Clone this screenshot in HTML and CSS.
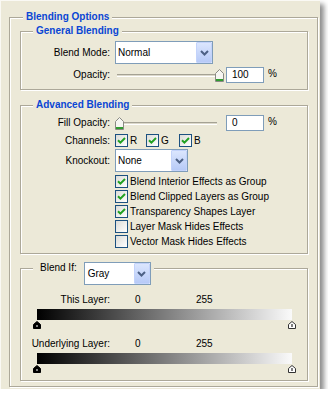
FILE: index.html
```html
<!DOCTYPE html>
<html lang="en">
<head>
    <meta charset="UTF-8">
    <meta name="viewport" content="width=device-width, initial-scale=1.0">
    <title>Blending Options</title>
    <link rel="stylesheet" href="styles.css">
</head>
<body>
    <div class="panel">
        <fieldset class="group outer">
            <legend>Blending Options</legend>

            <!-- General -->
            <fieldset class="group general">
                <legend>General Blending</legend>
                <div class="row">
                    <span class="lbl">Blend Mode:</span>
                    <div class="select mode">
                        <span>Normal</span>
                        <span class="drop"><svg width="9" height="6" viewBox="0 0 9 6"><path d="M1 1l3.5 3.5L8 1" fill="none" stroke="#4d6185" stroke-width="2"/></svg></span>
                    </div>
                </div>
                <div class="row slide-row">
                    <span class="lbl">Opacity:</span>
                    <div class="slider">
                        <div class="track"></div>
                        <svg class="thumb" style="left:100px" width="9" height="13" viewBox="0 0 9 13"><path d="M.5 12.5v-8l4-4 4 4v8z" fill="#f6f6f2" stroke="#8a8a84"/><path d="M1 10h7v2H1z" fill="#2f9c2f"/></svg>
                    </div>
                    <div class="num">100</div>
                    <span class="pct">%</span>
                </div>
            </fieldset>

            <!-- Advanced -->
            <fieldset class="group advanced">
                <legend>Advanced Blending</legend>
                <div class="row slide-row">
                    <span class="lbl">Fill Opacity:</span>
                    <div class="slider">
                        <div class="track"></div>
                        <svg class="thumb" style="left:0px" width="9" height="13" viewBox="0 0 9 13"><path d="M.5 12.5v-8l4-4 4 4v8z" fill="#f6f6f2" stroke="#8a8a84"/><path d="M1 10h7v2H1z" fill="#2f9c2f"/></svg>
                    </div>
                    <div class="num">0</div>
                    <span class="pct">%</span>
                </div>
                <div class="row channels">
                    <span class="lbl">Channels:</span>
                    <label class="check chan-r"><span class="cb"><svg width="9" height="9" viewBox="0 0 9 9"><path d="M1 4.2l2.4 2.4L8 2" fill="none" stroke="#21a121" stroke-width="2"/></svg></span><span class="txt">R</span></label>
                    <label class="check chan-g"><span class="cb"><svg width="9" height="9" viewBox="0 0 9 9"><path d="M1 4.2l2.4 2.4L8 2" fill="none" stroke="#21a121" stroke-width="2"/></svg></span><span class="txt">G</span></label>
                    <label class="check"><span class="cb"><svg width="9" height="9" viewBox="0 0 9 9"><path d="M1 4.2l2.4 2.4L8 2" fill="none" stroke="#21a121" stroke-width="2"/></svg></span><span class="txt">B</span></label>
                </div>
                <div class="row knock-row">
                    <span class="lbl">Knockout:</span>
                    <div class="select knock">
                        <span>None</span>
                        <span class="drop"><svg width="9" height="6" viewBox="0 0 9 6"><path d="M1 1l3.5 3.5L8 1" fill="none" stroke="#4d6185" stroke-width="2"/></svg></span>
                    </div>
                </div>
                <div class="list">
                    <label class="check"><span class="cb"><svg width="9" height="9" viewBox="0 0 9 9"><path d="M1 4.2l2.4 2.4L8 2" fill="none" stroke="#21a121" stroke-width="2"/></svg></span><span class="txt">Blend Interior Effects as Group</span></label>
                    <label class="check"><span class="cb"><svg width="9" height="9" viewBox="0 0 9 9"><path d="M1 4.2l2.4 2.4L8 2" fill="none" stroke="#21a121" stroke-width="2"/></svg></span><span class="txt">Blend Clipped Layers as Group</span></label>
                    <label class="check"><span class="cb"><svg width="9" height="9" viewBox="0 0 9 9"><path d="M1 4.2l2.4 2.4L8 2" fill="none" stroke="#21a121" stroke-width="2"/></svg></span><span class="txt">Transparency Shapes Layer</span></label>
                    <label class="check"><span class="cb"></span><span class="txt">Layer Mask Hides Effects</span></label>
                    <label class="check"><span class="cb"></span><span class="txt">Vector Mask Hides Effects</span></label>
                </div>
            </fieldset>

            <!-- Blend If -->
            <fieldset class="group blendif">
                <legend>
                    <span>Blend If:</span>
                    <div class="select gray">
                        <span>Gray</span>
                        <span class="drop"><svg width="9" height="6" viewBox="0 0 9 6"><path d="M1 1l3.5 3.5L8 1" fill="none" stroke="#4d6185" stroke-width="2"/></svg></span>
                    </div>
                </legend>
                <div class="brow">
                    <span class="lbl">This Layer:</span>
                    <span class="v0">0</span>
                    <span>255</span>
                </div>
                <div class="bar"></div>
                <div class="thumbs">
                    <svg width="8" height="8" viewBox="0 0 8 8"><path d="M.5 7.5v-4l3.5-3 3.5 3v4z" fill="#000" stroke="#000"/><path d="M3.5 4h1v2h-1z" fill="#fff"/></svg>
                    <svg width="8" height="8" viewBox="0 0 8 8"><path d="M.5 7.5v-4l3.5-3 3.5 3v4z" fill="#fff" stroke="#333"/><path d="M3.5 3h1v3h-1z" fill="#000"/></svg>
                </div>
                <div class="brow second">
                    <span class="lbl">Underlying Layer:</span>
                    <span class="v0">0</span>
                    <span>255</span>
                </div>
                <div class="bar"></div>
                <div class="thumbs">
                    <svg width="8" height="8" viewBox="0 0 8 8"><path d="M.5 7.5v-4l3.5-3 3.5 3v4z" fill="#000" stroke="#000"/><path d="M3.5 4h1v2h-1z" fill="#fff"/></svg>
                    <svg width="8" height="8" viewBox="0 0 8 8"><path d="M.5 7.5v-4l3.5-3 3.5 3v4z" fill="#fff" stroke="#333"/><path d="M3.5 3h1v3h-1z" fill="#000"/></svg>
                </div>
            </fieldset>
        </fieldset>
    </div>
</body>
</html>
```

FILE: styles.css
```css
* {
    box-sizing: border-box;
}
body {
    margin: 0;
    background: #fff;
    font-family: "Liberation Sans", Arial, sans-serif;
    font-size: 10px;
    line-height: 12px;
    color: #000;
}
.panel {
    width: 320px;
    height: 389px;
    padding: 10px 2px 2px 8px;
    background: #ece9d8;
    border-top: 1px solid #faf9f4;
    border-left: 1px solid #faf9f4;
    box-shadow: 4px 4px 5px rgba(0,0,0,0.45);
}
.group {
    margin: 0;
    padding: 4px 0 6px 0;
    min-width: 0;
    border: 1px solid #aca899;
    box-shadow: inset 1px 1px 0 #fff, 1px 1px 0 #fff;
}
.group legend {
    margin-left: 12px;
    padding: 0 3px;
    background: #ece9d8;
    color: #0a46d4;
    font-weight: bold;
    line-height: 12px;
}
.outer {
    padding: 2px 9px 5px 10px;
}
.outer > legend {
    margin-left: 3px;
}
.advanced {
    margin-top: 9px;
    padding-bottom: 5px;
}
.blendif {
    margin-top: 8px;
    padding: 20px 0 7px 0;
}
.blendif legend {
    display: flex;
    align-items: flex-start;
    height: 12px;
    padding: 0 3px 0 7px;
    color: #000;
    font-weight: normal;
}
.row {
    display: flex;
    align-items: center;
}
.lbl {
    width: 89px;
    margin-right: 5px;
    text-align: right;
    white-space: nowrap;
}
.slide-row {
    height: 16px;
    margin-top: 3px;
}
.advanced .slide-row {
    margin-top: 0;
}
.select {
    display: flex;
    align-items: center;
    height: 23px;
    padding-left: 2px;
    border: 1px solid #7f9db9;
    background: #fff;
}
.select .drop {
    display: flex;
    align-items: center;
    justify-content: center;
    width: 16px;
    height: 21px;
    margin-left: auto;
    border: 1px solid #c3d3fb;
    border-radius: 1px;
    background: linear-gradient(#dbe6fe, #b7caf7);
}
.mode {
    width: 98px;
}
.knock {
    width: 73px;
}
.gray {
    width: 67px;
    margin-left: 7px;
    padding-left: 3px;
}
.slider {
    position: relative;
    width: 109px;
    height: 13px;
    padding-top: 5px;
    margin-right: 2px;
}
.track {
    height: 3px;
    margin: 0 7px 0 2px;
    background: #dcd9cb;
    border-top: 1px solid #a5a294;
    border-bottom: 1px solid #fff;
}
.thumb {
    position: absolute;
    top: 0;
}
.num {
    width: 38px;
    height: 16px;
    padding-left: 5px;
    border: 1px solid #7f9db9;
    background: #fff;
    line-height: 14px;
}
.pct {
    margin-left: 4px;
    margin-top: -3px;
}
.channels {
    height: 13px;
    margin-top: 3px;
}
.check {
    display: flex;
    align-items: center;
    height: 13px;
}
.chan-r {
    width: 31px;
}
.chan-g {
    width: 33px;
}
.cb {
    display: flex;
    align-items: center;
    justify-content: center;
    width: 13px;
    height: 13px;
    border: 1px solid #1c5180;
    background: linear-gradient(135deg, #dcdcd7, #fff);
}
.check .txt {
    margin-left: 2px;
    white-space: nowrap;
}
.knock-row {
    margin-top: 2px;
}
.list {
    margin-left: 94px;
    padding-top: 1px;
}
.list .check {
    margin-top: 2px;
}
.brow {
    display: flex;
    height: 12px;
}
.brow.second {
    margin-top: 9px;
}
.v0 {
    width: 61px;
    margin-left: 20px;
}
.bar {
    width: 255px;
    height: 11px;
    margin: 3px 0 0 16px;
    background: linear-gradient(to right, #000, #fafafa);
}
.thumbs {
    display: flex;
    justify-content: space-between;
    width: 263px;
    height: 9px;
    margin-left: 12px;
    padding-top: 1px;
}
```
